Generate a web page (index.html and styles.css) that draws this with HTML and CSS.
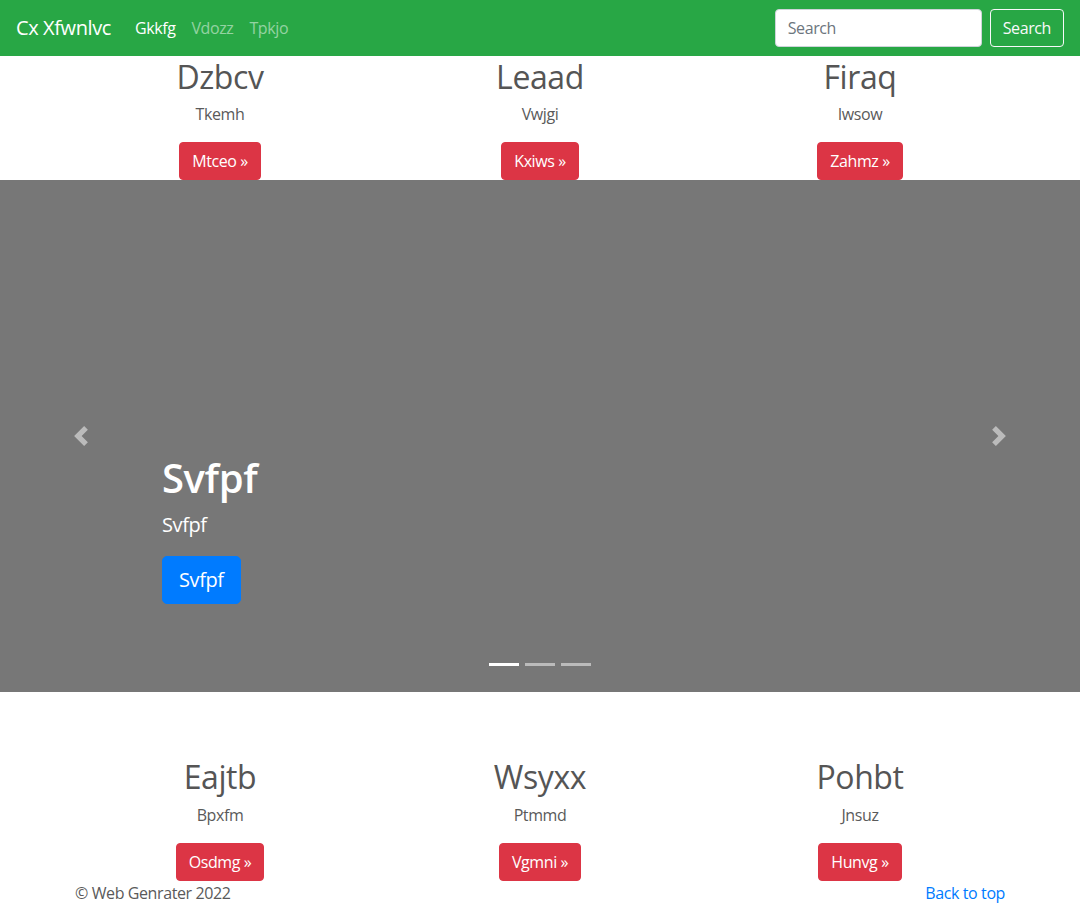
FILE: index.html
```html
<!DOCTYPE html>
<html lang="en">
<head>
<meta charset="utf-8">
<title>Cx Xfwnlvc</title>
<link rel="stylesheet" href="styles.css">
</head>
<body>
<nav class="navbar">
  <a class="brand" href="#">Cx Xfwnlvc</a>
  <ul class="nav">
    <li><a class="nav-link active" href="#">Gkkfg</a></li>
    <li><a class="nav-link" href="#">Vdozz</a></li>
    <li><a class="nav-link" href="#">Tpkjo</a></li>
  </ul>
  <form class="search-form">
    <input class="search-input" type="text" placeholder="Search">
    <button class="btn btn-outline-light" type="button">Search</button>
  </form>
</nav>

<section class="container marketing">
  <div class="row">
    <div class="col">
      <h2>Dzbcv</h2>
      <p>Tkemh</p>
      <a class="btn btn-danger" href="#">Mtceo &raquo;</a>
    </div>
    <div class="col">
      <h2>Leaad</h2>
      <p>Vwjgi</p>
      <a class="btn btn-danger" href="#">Kxiws &raquo;</a>
    </div>
    <div class="col">
      <h2>Firaq</h2>
      <p>Iwsow</p>
      <a class="btn btn-danger" href="#">Zahmz &raquo;</a>
    </div>
  </div>
</section>

<div class="carousel">
  <div class="carousel-item">
    <div class="carousel-caption">
      <h1>Svfpf</h1>
      <p>Svfpf</p>
      <a class="btn btn-lg btn-primary" href="#">Svfpf</a>
    </div>
  </div>
  <a class="carousel-control prev" href="#">
    <svg viewBox="0 0 8 8" width="20" height="20"><path fill="#fff" d="M5.25 0l-4 4 4 4 1.5-1.5L4.25 4l2.5-2.5L5.25 0z"/></svg>
  </a>
  <a class="carousel-control next" href="#">
    <svg viewBox="0 0 8 8" width="20" height="20"><path fill="#fff" d="M2.75 0l-1.5 1.5L3.75 4l-2.5 2.5L2.75 8l4-4-4-4z"/></svg>
  </a>
  <div class="indicators">
    <span class="indicator active"></span>
    <span class="indicator"></span>
    <span class="indicator"></span>
  </div>
</div>

<section class="container marketing bottom">
  <div class="row">
    <div class="col">
      <h2>Eajtb</h2>
      <p>Bpxfm</p>
      <a class="btn btn-danger" href="#">Osdmg &raquo;</a>
    </div>
    <div class="col">
      <h2>Wsyxx</h2>
      <p>Ptmmd</p>
      <a class="btn btn-danger" href="#">Vgmni &raquo;</a>
    </div>
    <div class="col">
      <h2>Pohbt</h2>
      <p>Jnsuz</p>
      <a class="btn btn-danger" href="#">Hunvg &raquo;</a>
    </div>
  </div>
</section>

<footer class="container footer">
  <p class="copy">&copy; Web Genrater 2022</p>
  <a class="back" href="#">Back to top</a>
</footer>
</body>
</html>
```

FILE: styles.css
```css
* { box-sizing: border-box; }
html, body { margin: 0; padding: 0; overflow: hidden; }
body {
  font-family: "Open Sans", "Noto Sans", sans-serif;
  font-size: 16px;
  line-height: 1.5;
  letter-spacing: -0.025em;
  color: #5a5a5a;
  background: #fff;
  height: 905px;
}
a { text-decoration: none; }

.navbar {
  height: 56px;
  background: #28a745;
  padding: 8px 16px;
  display: flex;
  align-items: center;
}
.brand {
  color: #fff;
  font-size: 20px;
  line-height: 30px;
  padding: 5px 0;
  margin-right: 16px;
}
.nav {
  list-style: none;
  margin: 0;
  padding: 0;
  display: flex;
  flex: 1;
}
.nav-link {
  display: block;
  padding: 8px;
  color: rgba(255,255,255,.5);
}
.nav-link.active { color: #fff; }
.search-form { display: flex; align-items: center; }
.search-input {
  width: 207px;
  height: 38px;
  padding: 6px 12px;
  font: inherit;
  letter-spacing: inherit;
  color: #495057;
  border: 1px solid #ced4da;
  border-radius: 4px;
  margin-right: 8px;
  background: #fff;
}
.search-input::placeholder { color: #6c757d; }

.btn {
  display: inline-block;
  font: inherit;
  letter-spacing: inherit;
  font-size: 16px;
  line-height: 24px;
  padding: 6px 12px;
  border: 1px solid transparent;
  border-radius: 4px;
  cursor: pointer;
}
.btn-outline-light {
  color: #f8f9fa;
  border-color: #f8f9fa;
  background: transparent;
}
.btn-danger { color: #fff; background: #dc3545; border-color: #dc3545; }
.btn-primary { color: #fff; background: #007bff; border-color: #007bff; }
.btn-lg { font-size: 20px; line-height: 30px; padding: 8px 16px; border-radius: 5px; }

.container { width: 960px; margin: 0 auto; }
.row { display: grid; grid-template-columns: repeat(3, 1fr); }
.col { padding: 0 15px; text-align: center; }
.col h2 {
  margin: 0 0 6px;
  padding-top: 2px;
  font-size: 32px;
  line-height: 1.2;
  font-weight: 400;
  color: #555;
}
.col p { margin: 0 0 16px; }
.col .btn { vertical-align: top; }
.bottom { margin-top: 64px; }

.carousel { position: relative; height: 512px; background: #777; }
.carousel-item { position: relative; height: 100%; }
.carousel-caption {
  position: absolute;
  left: 15%;
  right: 15%;
  bottom: 48px;
  padding: 20px 0 40px;
  color: #fff;
  display: flex;
  flex-direction: column;
  align-items: flex-start;
}
.carousel-caption h1 {
  margin: 0 0 8px;
  font-size: 40px;
  line-height: 1.2;
  font-weight: 600;
}
.carousel-caption p {
  margin: 0 0 16px;
  font-size: 20px;
  line-height: 30px;
}
.carousel-control {
  position: absolute;
  top: 0;
  bottom: 0;
  width: 15%;
  display: flex;
  align-items: center;
  justify-content: center;
  opacity: .5;
}
.carousel-control.prev { left: 0; }
.carousel-control.next { right: 0; }
.indicators {
  position: absolute;
  left: 0;
  right: 0;
  bottom: 26px;
  display: flex;
  justify-content: center;
  gap: 6px;
}
.indicator { width: 30px; height: 3px; background: #fff; opacity: .5; }
.indicator.active { opacity: 1; }

.footer {
  padding: 0 15px;
  display: flex;
  justify-content: space-between;
}
.footer p { margin: 0; }
.back { color: #007bff; }
```
